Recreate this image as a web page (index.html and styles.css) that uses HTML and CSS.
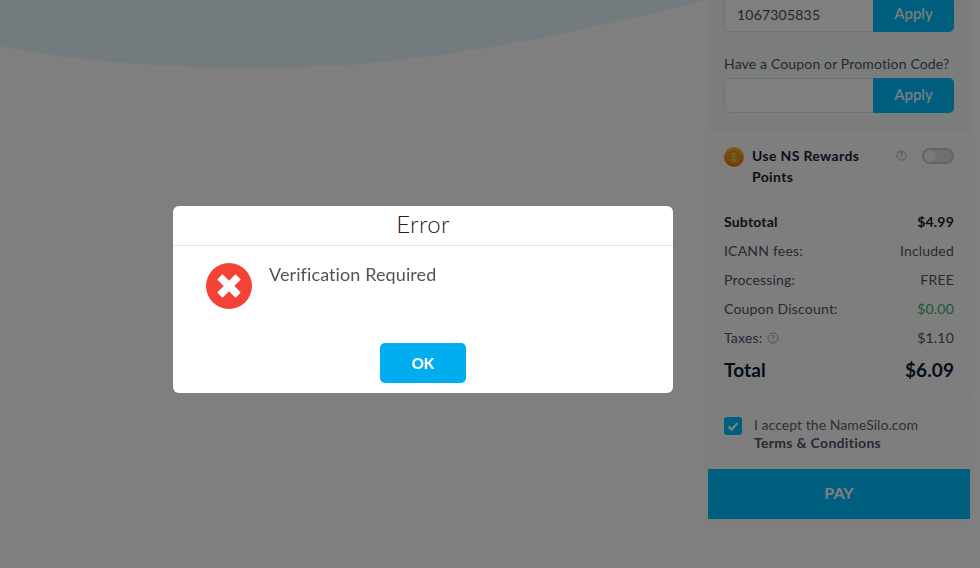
FILE: index.html
```html
<!DOCTYPE html>
<html lang="en">
<head>
<meta charset="utf-8">
<title>Checkout</title>
<link rel="stylesheet" href="styles.css">
</head>
<body>
<svg class="wave" viewBox="0 0 720 70" preserveAspectRatio="none" aria-hidden="true"><path d="M0 0H706C640 16 560 38 440 55C340 69 250 71 170 66C100 62 40 55 0 46Z"/></svg>
<div class="page">
  <aside class="sidebar">
    <section class="codes">
      <div class="field"><span class="input">1067305835</span><span class="apply">Apply</span></div>
      <div class="label">Have a Coupon or Promotion Code?</div>
      <div class="field tall"><span class="input"></span><span class="apply">Apply</span></div>
    </section>
    <section class="summary">
      <div class="rewards">
        <svg class="coin" viewBox="0 0 20 20" aria-hidden="true"><defs><linearGradient id="ring" x1="0" y1="0" x2="0" y2="1"><stop offset="0" stop-color="#f8b818"/><stop offset="1" stop-color="#f07008"/></linearGradient></defs><circle cx="10" cy="10" r="8.4" fill="#c89838" stroke="url(#ring)" stroke-width="3.2"/><rect x="7.2" y="5.8" width="5.6" height="8.6" rx="1.2" fill="#f8b830"/><path d="M7.2 8.8h5.6M7.2 11.4h5.6" stroke="#c89838" stroke-width=".8"/></svg>
        <span class="rewards-text">Use NS Rewards Points</span>
        <svg class="help" viewBox="0 0 12 12" aria-hidden="true"><circle cx="6" cy="6" r="5" fill="none" stroke="currentColor"/><text x="6" y="8.7" text-anchor="middle" class="help-q">?</text></svg>
        <span class="toggle"><span class="knob"></span></span>
      </div>
      <div class="rows">
        <div class="row strong"><span>Subtotal</span><span>$4.99</span></div>
        <div class="row"><span>ICANN fees:</span><span>Included</span></div>
        <div class="row"><span>Processing:</span><span>FREE</span></div>
        <div class="row"><span>Coupon Discount:</span><span class="green">$0.00</span></div>
        <div class="row"><span class="tax">Taxes: <svg class="help small" viewBox="0 0 12 12" aria-hidden="true"><circle cx="6" cy="6" r="5" fill="none" stroke="currentColor"/><text x="6" y="8.7" text-anchor="middle" class="help-q">?</text></svg></span><span>$1.10</span></div>
        <div class="row total"><span>Total</span><span>$6.09</span></div>
      </div>
    </section>
    <section class="terms">
      <span class="check"><svg viewBox="0 0 18 18" aria-hidden="true"><path d="M4.5 9.5l3 3 6-6.5" fill="none" stroke="#fff" stroke-width="2.4"/></svg></span>
      <div class="terms-text">I accept the NameSilo.com<br><b>Terms &amp; Conditions</b></div>
    </section>
    <div class="pay">PAY</div>
  </aside>
</div>
<div class="overlay">
  <div class="modal">
    <div class="modal-title">Error</div>
    <div class="modal-body">
      <svg class="err" viewBox="0 0 46 46" aria-hidden="true"><circle cx="23" cy="23" r="23" fill="#f44336"/><g fill="#fff"><rect x="10" y="19.2" width="26" height="7.6" rx="1.2" transform="rotate(45 23 23)"/><rect x="10" y="19.2" width="26" height="7.6" rx="1.2" transform="rotate(-45 23 23)"/></g></svg>
      <p class="msg">Verification Required</p>
    </div>
    <div class="modal-foot"><button class="ok" type="button">OK</button></div>
  </div>
</div>
</body>
</html>
```
FILE: styles.css
```css
* { box-sizing: border-box; }
html, body { margin: 0; height: 100%; overflow: hidden; }
body { background: #fff; font-family: "Lato", "Open Sans", sans-serif; color: #4a5568; position: relative; }
.wave { position: absolute; left: 0; top: 0; width: 720px; height: 70px; fill: #e6f6fd; }
.page { display: flex; justify-content: flex-end; padding-right: 10px; position: relative; }
.sidebar { width: 262px; margin-top: -3px; display: flex; flex-direction: column; background: #fdfdfd; box-shadow: 0 0 6px rgba(0,0,0,.06); }
.codes { padding: 0 16px 18px; background: #f7f8f9; }
.field { display: flex; height: 35px; }
.input { flex: 1; border: 1px solid #e0e4e8; border-right: 0; border-radius: 5px 0 0 5px; background: #fff; font-size: 14px; letter-spacing: .2px; line-height: 33px; padding-left: 12px; color: #4a4f57; }
.apply { width: 81px; background: #00bcff; border-radius: 0 5px 5px 0; color: #fff; font-size: 15px; font-weight: 500; text-align: center; line-height: 33px; }
.label { margin: 22px 0 4px; font-size: 14px; letter-spacing: .15px; line-height: 20px; color: #4a5568; white-space: nowrap; }
.summary { padding: 14px 16px 13px; border-bottom: 1px solid #f3f4f5; }
.rewards { display: flex; align-items: flex-start; height: 62px; }
.coin { width: 20px; height: 20px; flex: none; margin: 2px 0 0 0; }
.rewards-text { width: 120px; margin-left: 8px; font-size: 14px; font-weight: 700; line-height: 21px; color: #152238; letter-spacing: .35px; }
.help { width: 11px; height: 11px; color: #9ca3af; flex: none; margin: 5px 0 0 auto; }
.help.small { width: 12px; height: 12px; margin: 0 0 0 3px; }
.help-q { font-size: 8px; font-weight: 700; fill: currentColor; }
.toggle { width: 32px; height: 16px; margin: 3px 0 0 15px; border: 2px solid #c4cad0; border-radius: 8px; background: #dde2e6; display: flex; align-items: center; }
.knob { width: 12px; height: 12px; background: #f2f2f2; border-radius: 50%; }
.rows { display: flex; flex-direction: column; }
.row { display: flex; justify-content: space-between; height: 29px; align-items: center; font-size: 14px; letter-spacing: .2px; color: #4a5568; }
.row.strong { font-weight: 700; color: #152238; }
.row.total { font-size: 19px; font-weight: 700; color: #0b1a3a; height: 34px; letter-spacing: .1px; }
.green { color: #2fb56a; }
.tax { display: inline-flex; align-items: center; gap: 2px; }
.terms { display: flex; gap: 12px; padding: 16px 16px 17px; }
.check { width: 18px; height: 18px; border-radius: 3px; background: #00bcff; margin-top: 1px; flex: none; display: block; }
.check svg { display: block; width: 18px; height: 18px; }
.terms-text { font-size: 14px; line-height: 18px; color: #5a6270; letter-spacing: .05px; }
.terms-text b { color: #4a5568; letter-spacing: .3px; }
.pay { height: 50px; background: #00bcff; color: #fff; text-align: center; font-size: 16px; font-weight: 700; line-height: 48px; }
.overlay { position: fixed; inset: 0; background: rgba(0,0,0,.5); display: flex; align-items: flex-start; padding: 206px 0 0 173px; }
.modal { width: 500px; height: 187px; background: #fff; border-radius: 6px; display: flex; flex-direction: column; }
.modal-title { height: 40px; border-bottom: 1px solid #e5e5e5; text-align: center; font-size: 24px; font-weight: 300; line-height: 36px; color: #222; letter-spacing: .4px; }
.modal-body { display: flex; padding: 17px 33px 0; gap: 17px; height: 97px; }
.err { width: 46px; height: 46px; flex: none; }
.msg { margin: -1px 0 0; font-size: 18px; line-height: 24px; color: #545454; letter-spacing: .1px; }
.modal-foot { display: flex; justify-content: center; }
.ok { width: 86px; height: 40px; background: #00aeef; color: #fff; border: 0; border-radius: 5px; font-family: inherit; font-size: 15px; font-weight: 900; }
```
